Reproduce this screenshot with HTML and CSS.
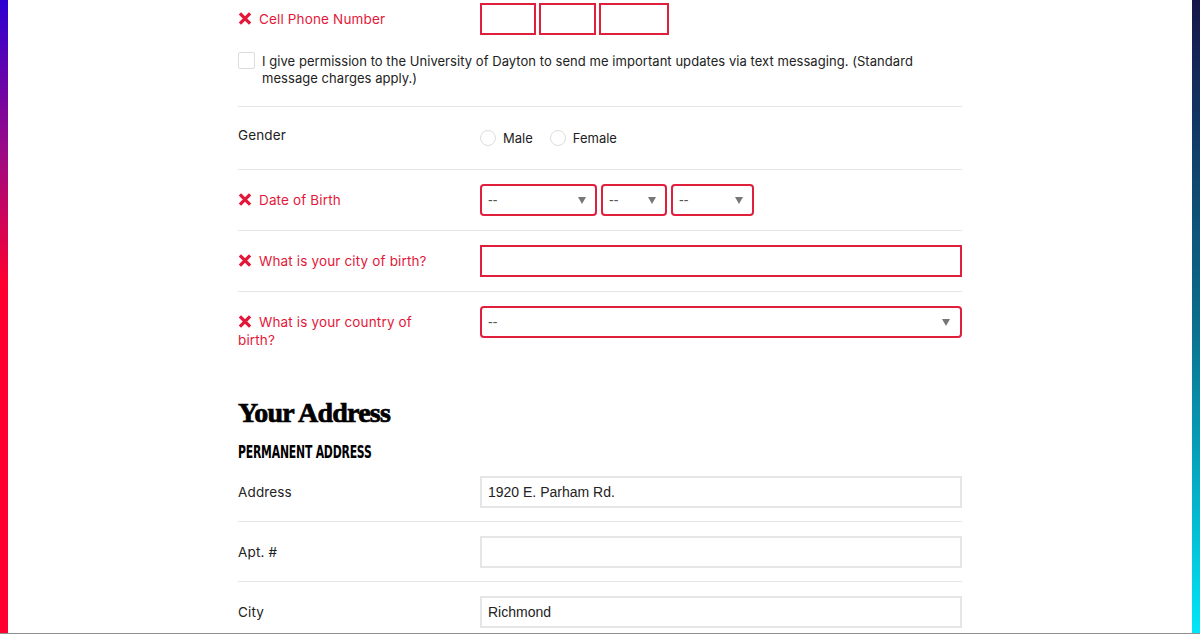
FILE: index.html
```html
<!DOCTYPE html>
<html lang="en">
<head>
<meta charset="utf-8">
<title>Application</title>
<link rel="stylesheet" href="styles.css">
</head>
<body>
<div class="page">
  <div class="bar bar-left"></div>
  <main class="main">
    <form class="form">
      <section class="group-top">
        <div class="row-plain">
          <label class="label label-error"><svg class="x-icon" viewBox="0 0 12 12" aria-hidden="true"><path d="M1.3 1.3 L10.7 10.7 M10.7 1.3 L1.3 10.7"/></svg>Cell Phone Number</label>
          <div class="field phone">
            <input class="input input-error phone-a" type="text">
            <input class="input input-error phone-b" type="text">
            <input class="input input-error phone-c" type="text">
          </div>
        </div>
        <div class="consent">
          <input class="checkbox" type="checkbox">
          <span class="consent-text">I give permission to the University of Dayton to send me important updates via text messaging. (Standard message charges apply.)</span>
        </div>
      </section>

      <div class="row row-gender">
        <label class="label">Gender</label>
        <div class="field radios">
          <label class="radio-option"><input class="radio" type="radio" name="g">Male</label>
          <label class="radio-option"><input class="radio" type="radio" name="g">Female</label>
        </div>
      </div>

      <div class="row">
        <label class="label label-error"><svg class="x-icon" viewBox="0 0 12 12" aria-hidden="true"><path d="M1.3 1.3 L10.7 10.7 M10.7 1.3 L1.3 10.7"/></svg>Date of Birth</label>
        <div class="field dob">
          <div class="select-wrap sel-month"><select class="select select-error"><option>--</option></select></div>
          <div class="select-wrap sel-day"><select class="select select-error"><option>--</option></select></div>
          <div class="select-wrap sel-year"><select class="select select-error"><option>--</option></select></div>
        </div>
      </div>

      <div class="row">
        <label class="label label-error"><svg class="x-icon" viewBox="0 0 12 12" aria-hidden="true"><path d="M1.3 1.3 L10.7 10.7 M10.7 1.3 L1.3 10.7"/></svg>What is your city of birth?</label>
        <div class="field">
          <input class="input input-error input-full" type="text">
        </div>
      </div>

      <div class="row row-last">
        <label class="label label-error"><svg class="x-icon" viewBox="0 0 12 12" aria-hidden="true"><path d="M1.3 1.3 L10.7 10.7 M10.7 1.3 L1.3 10.7"/></svg>What is your country of birth?</label>
        <div class="field">
          <div class="select-wrap sel-full"><select class="select select-error"><option>--</option></select></div>
        </div>
      </div>

      <h2 class="section-title">Your Address</h2>
      <h3 class="subsection-title">Permanent Address</h3>

      <div class="row row-addr">
        <label class="label">Address</label>
        <div class="field">
          <input class="input input-full" type="text" value="1920 E. Parham Rd.">
        </div>
      </div>
      <div class="row row-addr">
        <label class="label">Apt. #</label>
        <div class="field">
          <input class="input input-full" type="text" value="">
        </div>
      </div>
      <div class="row row-addr">
        <label class="label">City</label>
        <div class="field">
          <input class="input input-full" type="text" value="Richmond">
        </div>
      </div>
    </form>
  </main>
  <div class="bar bar-right"></div>
</div>
<div class="bottom-line"></div>
</body>
</html>
```
FILE: styles.css
```css
* { box-sizing: border-box; }

html, body {
  margin: 0;
  padding: 0;
  background: #ffffff;
}

body {
  font-family: "Inter", "Noto Sans", sans-serif;
  color: #222222;
  overflow: hidden;
}

.page {
  display: flex;
  height: 633px;
  overflow: hidden;
}

.bar {
  width: 8px;
  flex: 0 0 8px;
}

.bar-left {
  background: linear-gradient(to bottom, #2c00d2 0px, #9a0a86 150px, #ff002e 285px, #ff002e 100%);
}

.bar-right {
  background: linear-gradient(to bottom, #17164a 0%, #0a6c8a 50%, #00e6f8 100%);
}

.bottom-line {
  height: 1px;
  background: #8e8e8e;
}

.main {
  flex: 1;
  padding-left: 230px;
  overflow: hidden;
}

.form {
  width: 724px;
}

/* rows */
.group-top {
  padding-top: 3px;
  padding-bottom: 19px;
  border-bottom: 1px solid #e6e6e6;
}

.row-plain,
.row {
  display: grid;
  grid-template-columns: 242px 482px;
  align-items: start;
}

.row {
  padding: 14px 0;
  border-bottom: 1px solid #e6e6e6;
}

.row-gender {
  padding-bottom: 16px;
}

.row-addr {
  padding: 14px 0 13px;
}

.row-last {
  border-bottom: none;
  padding-bottom: 3px;
}

.label {
  display: block;
  padding-top: 7px;
  padding-right: 42px;
  font-size: 13.5px;
  line-height: 18px;
  letter-spacing: 0.15px;
  color: #222222;
}

.row-gender .label {
  padding-top: 5px;
}

.label-error {
  color: #e3173a;
}

.x-icon {
  width: 14px;
  height: 13px;
  margin-right: 7px;
  vertical-align: -1px;
  fill: none;
  stroke: #e3173a;
  stroke-width: 3;
}

.field {
  display: flex;
  align-items: center;
  gap: 4px;
  min-height: 32px;
}

/* inputs */
.input {
  height: 32px;
  border: 2px solid #e6e6e6;
  border-radius: 0;
  padding: 0 6px;
  font-family: "Liberation Sans", Arial, sans-serif;
  font-size: 14px;
  color: #222222;
  background: #ffffff;
  outline: none;
}

.input-error {
  border-color: #df1f3b;
}

.input-full {
  width: 482px;
}

.phone {
  gap: 3px;
}

.phone-a { width: 56px; }
.phone-b { width: 57px; }
.phone-c { width: 70px; }

/* consent */
.consent {
  display: flex;
  align-items: flex-start;
  margin-top: 17px;
}

.checkbox {
  appearance: none;
  -webkit-appearance: none;
  width: 17px;
  height: 17px;
  margin: 0 7px 0 0;
  border: 1px solid #dcdcdc;
  border-radius: 2px;
  background: #ffffff;
  flex: 0 0 17px;
}

.consent-text {
  display: block;
  padding-top: 1px;
  max-width: 690px;
  font-size: 13px;
  line-height: 17px;
  letter-spacing: 0.05px;
  color: #222222;
}

/* radios */
.radios {
  gap: 17px;
  min-height: 32px;
  padding-top: 1px;
}

.radio-option {
  display: flex;
  align-items: center;
  font-size: 13px;
  color: #222222;
}

.radio {
  appearance: none;
  -webkit-appearance: none;
  width: 16px;
  height: 16px;
  margin: 0 7px 0 0;
  border: 1px solid #dddddd;
  border-radius: 50%;
  background: #ffffff;
}

/* selects */
.select-wrap {
  position: relative;
  height: 32px;
}

.select-wrap::after {
  content: "";
  position: absolute;
  right: 11px;
  top: 13px;
  border-left: 4px solid transparent;
  border-right: 4px solid transparent;
  border-top: 7px solid #777777;
  pointer-events: none;
}

.select {
  appearance: none;
  -webkit-appearance: none;
  width: 100%;
  height: 32px;
  padding: 0 6px;
  border: 2px solid #e6e6e6;
  border-radius: 4px;
  background: #ffffff;
  font-family: "Liberation Sans", Arial, sans-serif;
  font-size: 14px;
  color: #555555;
  outline: none;
}

.select-error {
  border-color: #df1f3b;
}

.sel-month { width: 117px; }
.sel-day { width: 66px; }
.sel-year { width: 83px; }
.sel-full { width: 482px; }

.sel-full::after {
  right: 12px;
}

/* headings */
.section-title {
  margin: 44px 0 0;
  font-family: "Liberation Serif", "DejaVu Serif", serif;
  font-weight: 700;
  font-size: 28px;
  line-height: 34px;
  letter-spacing: -0.8px;
  -webkit-text-stroke: 0.7px #000000;
  color: #000000;
}

.subsection-title {
  margin: 11px 0 0;
  font-family: "Liberation Sans Narrow", "DejaVu Sans Condensed", "Liberation Sans", sans-serif;
  font-weight: 700;
  font-size: 18px;
  line-height: 21px;
  text-transform: uppercase;
  letter-spacing: -0.3px;
  color: #000000;
  transform: scaleX(0.67);
  transform-origin: left center;
}
```
